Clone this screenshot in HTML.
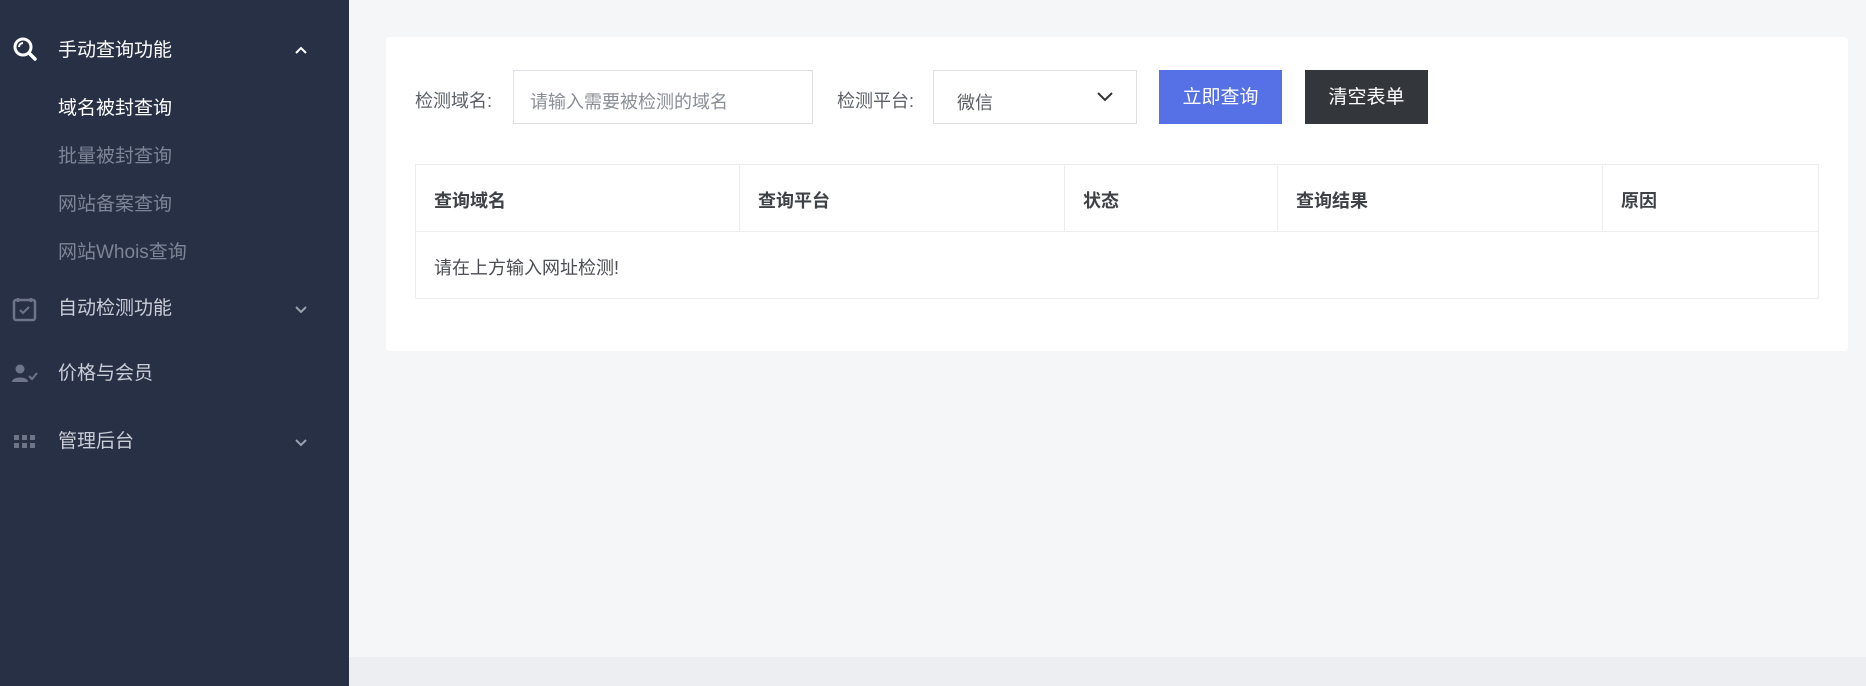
<!DOCTYPE html>
<html><head><meta charset="utf-8"><style>
*{margin:0;padding:0;box-sizing:border-box}
body{width:1866px;height:686px;overflow:hidden;background:#f5f6f8;font-family:"Liberation Sans","Noto Sans CJK SC",sans-serif;position:relative}
.sb{position:absolute;left:0;top:0;width:349px;height:686px;background:#283046}
.it{position:absolute;left:58px;font-size:19px;line-height:24px;color:#c9cdd6}
.sub{color:#7d8496}
.chev{position:absolute;left:294px;width:14px;height:14px}
.ic{position:absolute;left:12px}
.bottom{position:absolute;left:349px;top:657px;width:1517px;height:29px;background:#eceef2}
.card{position:absolute;left:386px;top:37px;width:1462px;height:314px;background:#fff;border-radius:4px}
.lbl{position:absolute;top:89px;font-size:18px;line-height:24px;color:#5b5f66}
.box{position:absolute;top:70px;height:54px;border:1px solid #dcdfe3;background:#fff}
.btn{position:absolute;top:70px;height:54px;width:123px;color:#fff;font-size:19px;line-height:56px;text-align:center}
table{position:absolute;left:415px;top:164px;width:1404px;border-collapse:collapse;font-size:18px;color:#4a4d52}
td,th{border:1px solid #ebedf0;text-align:left;padding-left:18px;padding-top:3px}
th{height:67px;font-weight:bold;color:#3e4246}
td{height:67px}
</style></head><body>
<div class="sb">
 <svg class="ic" style="top:36px" width="26" height="26" viewBox="0 0 26 26"><circle cx="11" cy="11" r="8" fill="none" stroke="#fff" stroke-width="3"/><path d="M17 17l6 6" stroke="#fff" stroke-width="3.5" stroke-linecap="round"/><path d="M7 11a4 4 0 0 1 4-4" stroke="#fff" stroke-width="2" fill="none"/></svg>
 <div class="it" style="top:39px;color:#fff">手动查询功能</div>
 <svg class="chev" style="top:43px" viewBox="0 0 14 14"><path d="M2 10l5-5 5 5" stroke="#fff" stroke-width="2" fill="none"/></svg>
 <div class="it" style="top:97px;color:#fff">域名被封查询</div>
 <div class="it sub" style="top:145px">批量被封查询</div>
 <div class="it sub" style="top:193px">网站备案查询</div>
 <div class="it sub" style="top:241px">网站Whois查询</div>
 <svg class="ic" style="top:296px" width="26" height="26" viewBox="0 0 26 26"><rect x="2" y="4" width="21" height="20" rx="2" fill="none" stroke="#6e7589" stroke-width="2.5"/><path d="M6 2v4M19 2v4" stroke="#6e7589" stroke-width="2.5"/><path d="M8 14l3 3 6-6" stroke="#6e7589" stroke-width="2" fill="none"/></svg>
 <div class="it" style="top:297px">自动检测功能</div>
 <svg class="chev" style="top:303px" viewBox="0 0 14 14"><path d="M2 4l5 5 5-5" stroke="#9aa0ae" stroke-width="2" fill="none"/></svg>
 <svg class="ic" style="top:363px" width="26" height="22" viewBox="0 0 26 22"><circle cx="8" cy="6" r="4.5" fill="#6e7589"/><path d="M0 19c0-6 16-6 16 0z" fill="#6e7589"/><path d="M17 13l3 3 5-6" stroke="#6e7589" stroke-width="2" fill="none"/></svg>
 <div class="it" style="top:362px">价格与会员</div>
 <svg class="ic" style="top:434px" width="26" height="16" viewBox="0 0 26 16"><g fill="#6e7589"><rect x="2" y="1" width="5" height="5"/><rect x="10" y="1" width="5" height="5"/><rect x="18" y="1" width="5" height="5"/><rect x="2" y="9" width="5" height="5"/><rect x="10" y="9" width="5" height="5"/><rect x="18" y="9" width="5" height="5"/></g></svg>
 <div class="it" style="top:430px">管理后台</div>
 <svg class="chev" style="top:436px" viewBox="0 0 14 14"><path d="M2 4l5 5 5-5" stroke="#9aa0ae" stroke-width="2" fill="none"/></svg>
</div>
<div class="bottom"></div>
<div class="card"></div>
<div class="lbl" style="left:415px">检测域名:</div>
<div class="box" style="left:513px;width:300px"><span style="position:absolute;left:16px;top:17px;font-size:18px;color:#8a8e95">请输入需要被检测的域名</span></div>
<div class="lbl" style="left:837px">检测平台:</div>
<div class="box" style="left:933px;width:204px"><span style="position:absolute;left:23px;top:18px;font-size:18px;color:#5b5f66">微信</span><svg style="position:absolute;left:162px;top:19px" width="18" height="14" viewBox="0 0 18 14"><path d="M2 3l7 7 7-7" stroke="#333" stroke-width="2" fill="none"/></svg></div>
<div class="btn" style="left:1159px;background:#5670e6">立即查询</div>
<div class="btn" style="left:1305px;background:#33373b">清空表单</div>
<table><tr><th style="width:324px">查询域名</th><th style="width:325px">查询平台</th><th style="width:213px">状态</th><th style="width:325px">查询结果</th><th>原因</th></tr>
<tr><td colspan="5">请在上方输入网址检测!</td></tr></table>
</body></html>
